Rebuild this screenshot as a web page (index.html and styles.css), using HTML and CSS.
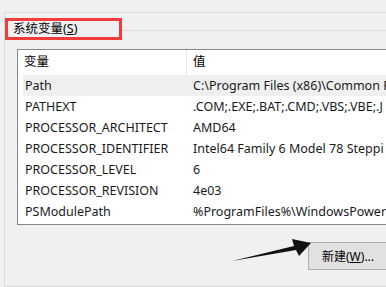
FILE: index.html
```html
<!DOCTYPE html>
<html lang="zh-CN">
<head>
  <meta charset="UTF-8" />
  <title>环境变量</title>
  <link rel="stylesheet" href="styles.css">
</head>
<body>

<div class="panel">
  <div class="caption-row">
    <div class="caption">系统变量(<u>S</u>)</div>
    <div class="group-line"></div>
  </div>

  <div class="list">
    <div class="list-head">
      <div class="head-cell name">变量</div>
      <div class="head-cell value">值</div>
    </div>
    <div class="row selected"><span class="name">Path</span><span class="value">C:\Program Files (x86)\Common F</span></div>
    <div class="row"><span class="name">PATHEXT</span><span class="value">.COM;.EXE;.BAT;.CMD;.VBS;.VBE;.J</span></div>
    <div class="row"><span class="name">PROCESSOR_ARCHITECT</span><span class="value">AMD64</span></div>
    <div class="row"><span class="name">PROCESSOR_IDENTIFIER</span><span class="value">Intel64 Family 6 Model 78 Steppi</span></div>
    <div class="row"><span class="name">PROCESSOR_LEVEL</span><span class="value">6</span></div>
    <div class="row"><span class="name">PROCESSOR_REVISION</span><span class="value">4e03</span></div>
    <div class="row"><span class="name">PSModulePath</span><span class="value">%ProgramFiles%\WindowsPower</span></div>
  </div>

  <div class="actions">
    <button class="btn">新建(<u>W</u>)...</button>
  </div>
</div>

<!-- annotation arrow pointing at the button -->
<svg class="arrow" width="386" height="287" viewBox="0 0 386 287">
  <polygon points="232,261 294,246 292,239 311,243 299,256 296,250" fill="#111"/>
</svg>

</body>
</html>
```

FILE: styles.css
```css
body {
  margin: 0;
  background: #f0f0f0;
  font-family: "Noto Sans", "Noto Sans CJK SC", sans-serif;
  font-size: 12.5px;
  color: #1a1a1a;
  overflow: hidden;
  height: 287px;
}

.panel {
  margin: 12px 0 0 4px;
  height: 273px;
  border-top: 1px solid #dadada;
  border-left: 1px solid #dadada;
  border-bottom: 1px solid #dadada;
}

.caption-row {
  display: flex;
  margin-top: 5px;
}

.caption {
  box-sizing: border-box;
  width: 117px;
  height: 22px;
  padding-left: 5px;
  border: 3px solid #f23b3b;
  line-height: 15px;
  color: #000;
}

.group-line {
  flex: 1;
  margin-top: 12px;
  border-top: 1px solid #dadada;
}

.list {
  margin: 9px 0 0 12px;
  width: 370px;
  overflow: hidden;
  padding-bottom: 2px;
  background: #fff;
  border: 1px solid #828790;
  border-right: none;
}

.list-head {
  display: flex;
  height: 25px;
  line-height: 23px;
  color: #000;
}

.head-cell.name {
  width: 162px;
  padding-left: 6px;
  border-right: 1px solid #e5e5e5;
}

.head-cell.value {
  padding-left: 6px;
}

.row {
  display: flex;
  height: 21px;
  line-height: 21px;
  margin-left: 5px;
  white-space: nowrap;
}

.row.selected {
  background: #efefef;
}

.row .name {
  width: 168px;
  flex: none;
  padding-left: 2px;
}

.actions {
  margin: 17px 0 0 303px;
}

.btn {
  width: 80px;
  height: 28px;
  padding: 0 0 0 13px;
  text-align: left;
  white-space: nowrap;
  background: #e1e1e1;
  border: 1px solid #adadad;
  font-family: inherit;
  font-size: 12px;
  color: #000;
}

.arrow {
  position: absolute;
  top: 0;
  left: 0;
  pointer-events: none;
}
```
